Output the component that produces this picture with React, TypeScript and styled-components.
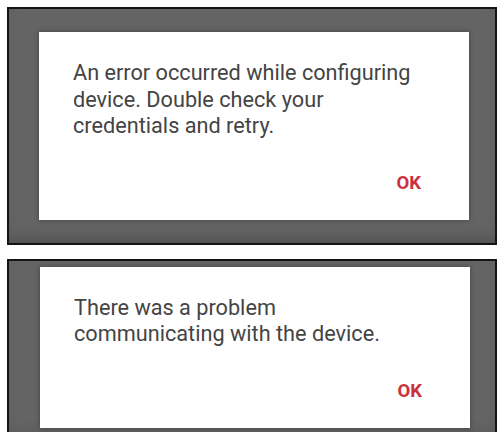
import styled, { createGlobalStyle } from 'styled-components';

const GlobalStyle = createGlobalStyle`
  html, body {
    margin: 0;
    padding: 0;
    background: #ffffff;
    overflow: hidden;
  }
  body {
    font-family: Roboto, "Noto Sans", Arial, sans-serif;
  }
`;

const Page = styled.div`
  display: flex;
  flex-direction: column;
  gap: 14px;
  padding: 7px 6px 0 7px;
  width: 490px;
`;

const Shot = styled.div<{ $cut?: boolean }>`
  box-sizing: border-box;
  width: 490px;
  background: #646464;
  border: 2px solid #141414;
  border-bottom: ${({ $cut }) => ($cut ? 'none' : '2px solid #141414')};
  box-shadow: inset 0 -12px 18px -10px rgba(0, 0, 0, 0.25);
  padding: ${({ $cut }) => ($cut ? '6px 26px 12px 31px' : '23px 26px 23px 30px')};
`;

const Dialog = styled.div`
  box-sizing: border-box;
  width: 430px;
  background: #ffffff;
  box-shadow: 0 0 5px rgba(0, 0, 0, 0.35);
  padding: 28px 48px 26px 34px;
  display: flex;
  flex-direction: column;
`;

const Message = styled.p`
  margin: 0 0 32px;
  max-width: 350px;
  font-size: 21.7px;
  line-height: 26.5px;
  color: #444444;
`;

const OkButton = styled.button`
  align-self: flex-end;
  border: none;
  background: none;
  padding: 0;
  font-family: Roboto, "Noto Sans", Arial, sans-serif;
  font-weight: 700;
  font-size: 18.5px;
  line-height: 22px;
  color: #c9323d;
  cursor: pointer;
`;

function AlertShot({ text, cut }: { text: string; cut?: boolean }) {
  return (
    <Shot $cut={cut}>
      <Dialog>
        <Message>{text}</Message>
        <OkButton>OK</OkButton>
      </Dialog>
    </Shot>
  );
}

function App() {
  return (
    <>
      <GlobalStyle />
      <Page>
        <AlertShot text="An error occurred while configuring device. Double check your credentials and retry." />
        <AlertShot text="There was a problem communicating with the device." cut />
      </Page>
    </>
  );
}

export default App;
